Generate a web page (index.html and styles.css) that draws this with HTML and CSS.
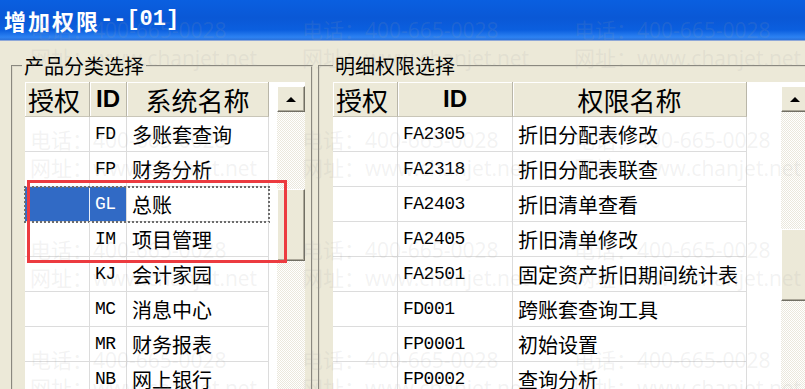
FILE: index.html
```html
<!DOCTYPE html>
<html lang="zh-CN">
<head>
<meta charset="utf-8">
<title>增加权限--[01]</title>
<link rel="stylesheet" href="styles.css">
</head>
<body>
<div class="window">
  <div class="titlebar"><span class="title-cn">增加权限</span><span class="title-code">--[01]</span></div>
  <div class="panes">
    <fieldset class="group group-left">
      <legend>产品分类选择</legend>
      <div class="list">
        <div class="grid grid-left">
          <div class="row head"><div class="c c-auth">授权</div><div class="c c-id">ID</div><div class="c c-name">系统名称</div></div>
          <div class="row"><div class="c c-auth"></div><div class="c c-id">FD</div><div class="c c-name">多账套查询</div></div>
          <div class="row"><div class="c c-auth"></div><div class="c c-id">FP</div><div class="c c-name">财务分析</div></div>
          <div class="row sel"><div class="c c-auth"></div><div class="c c-id">GL</div><div class="c c-name">总账</div></div>
          <div class="row"><div class="c c-auth"></div><div class="c c-id">IM</div><div class="c c-name">项目管理</div></div>
          <div class="row"><div class="c c-auth"></div><div class="c c-id">KJ</div><div class="c c-name">会计家园</div></div>
          <div class="row"><div class="c c-auth"></div><div class="c c-id">MC</div><div class="c c-name">消息中心</div></div>
          <div class="row"><div class="c c-auth"></div><div class="c c-id">MR</div><div class="c c-name">财务报表</div></div>
          <div class="row"><div class="c c-auth"></div><div class="c c-id">NB</div><div class="c c-name">网上银行</div></div>
        </div>
        <div class="gap"></div>
        <div class="vscroll">
          <div class="btn-up"></div>
          <div class="track"><div class="thumb thumb-left"></div></div>
        </div>
      </div>
    </fieldset>
    <fieldset class="group group-right">
      <legend>明细权限选择</legend>
      <div class="list">
        <div class="grid grid-right">
          <div class="row head"><div class="c c-auth">授权</div><div class="c c-id">ID</div><div class="c c-name">权限名称</div></div>
          <div class="row"><div class="c c-auth"></div><div class="c c-id">FA2305</div><div class="c c-name">折旧分配表修改</div></div>
          <div class="row"><div class="c c-auth"></div><div class="c c-id">FA2318</div><div class="c c-name">折旧分配表联查</div></div>
          <div class="row"><div class="c c-auth"></div><div class="c c-id">FA2403</div><div class="c c-name">折旧清单查看</div></div>
          <div class="row"><div class="c c-auth"></div><div class="c c-id">FA2405</div><div class="c c-name">折旧清单修改</div></div>
          <div class="row"><div class="c c-auth"></div><div class="c c-id">FA2501</div><div class="c c-name">固定资产折旧期间统计表</div></div>
          <div class="row"><div class="c c-auth"></div><div class="c c-id">FD001</div><div class="c c-name">跨账套查询工具</div></div>
          <div class="row"><div class="c c-auth"></div><div class="c c-id">FP0001</div><div class="c c-name">初始设置</div></div>
          <div class="row"><div class="c c-auth"></div><div class="c c-id">FP0002</div><div class="c c-name">查询分析</div></div>
        </div>
        <div class="gap gap-right"></div>
        <div class="vscroll">
          <div class="btn-up"></div>
          <div class="track"><div class="thumb thumb-right"></div></div>
        </div>
      </div>
    </fieldset>
  </div>
  <div class="redbox"></div>
  <div class="watermark">
    <div class="wm"><span>电话：400-665-0028</span><span>网址：www.chanjet.net</span></div>
    <div class="wm"><span>电话：400-665-0028</span><span>网址：www.chanjet.net</span></div>
    <div class="wm"><span>电话：400-665-0028</span><span>网址：www.chanjet.net</span></div>
    <div class="wm"><span>电话：400-665-0028</span><span>网址：www.chanjet.net</span></div>
    <div class="wm"><span>电话：400-665-0028</span><span>网址：www.chanjet.net</span></div>
    <div class="wm"><span>电话：400-665-0028</span><span>网址：www.chanjet.net</span></div>
    <div class="wm"><span>电话：400-665-0028</span><span>网址：www.chanjet.net</span></div>
    <div class="wm"><span>电话：400-665-0028</span><span>网址：www.chanjet.net</span></div>
    <div class="wm"><span>电话：400-665-0028</span><span>网址：www.chanjet.net</span></div>
    <div class="wm"><span>电话：400-665-0028</span><span>网址：www.chanjet.net</span></div>
    <div class="wm"><span>电话：400-665-0028</span><span>网址：www.chanjet.net</span></div>
    <div class="wm"><span>电话：400-665-0028</span><span>网址：www.chanjet.net</span></div>
  </div>
</div>
</body>
</html>
```
FILE: styles.css
```css
* { box-sizing: border-box; }
html, body { margin: 0; padding: 0; }
body {
  width: 805px;
  height: 389px;
  overflow: hidden;
  background: #ece9d8;
  font-family: "Noto Sans CJK SC", sans-serif;
  color: #000;
}
.window {
  position: relative;
  width: 805px;
  height: 389px;
  overflow: hidden;
}
.titlebar {
  height: 41px;
  display: flex;
  align-items: center;
  padding-left: 4px;
  color: #fff;
  background: linear-gradient(to bottom, #0a5fe0 0%, #0a58d6 45%, #0b5fdf 75%, #2d82f2 93%, #2a72dc 100%);
  border-bottom: 1px solid #8fa8d8;
}
.title-cn {
  font: bold 22px/1 "Noto Sans CJK SC", sans-serif;
  letter-spacing: 2px;
}
.title-code {
  font: bold 22px/1 "Liberation Mono", monospace;
}
.panes {
  display: flex;
  align-items: flex-start;
  margin-top: 13px;
}
.group {
  flex-shrink: 0;
  margin: 0;
  min-width: 0;
  height: 360px;
  border: 2px groove #dedbcc;
  padding-top: 4px;
}
.group legend {
  font-size: 20px;
  line-height: 24px;
  padding: 0 2px;
}
.group-left {
  margin-left: 11px;
  width: 302px;
  padding-left: 12px;
  padding-right: 6px;
}
.group-left legend { margin-left: -3px; }
.group-right {
  margin-left: 5px;
  width: 520px;
  padding-left: 13px;
  padding-right: 0;
}
.list {
  display: flex;
  background: #fff;
  height: 330px;
}
.grid { display: flex; flex-direction: column; flex-shrink: 0; }
.row { display: grid; height: 35px; }
.grid-left .row { grid-template-columns: 65px 37px 142px; }
.grid-right .row { grid-template-columns: 65px 115px 234px; }
.c {
  display: flex;
  align-items: center;
  border-right: 1px solid #dcdcdc;
  border-bottom: 1px solid #dcdcdc;
  white-space: nowrap;
  overflow: hidden;
}
.c-id {
  padding-left: 5px;
  font: 18px "Liberation Mono", monospace;
  letter-spacing: -0.5px;
  color: #000;
}
.c-name {
  padding-left: 5px;
  font-size: 20px;
}
.head .c {
  background: #ece9d8;
  border-right: 1px solid #b9b6a8;
  border-bottom: 1px solid #c9c6b8;
  box-shadow: inset 1px 1px 0 #fff;
  font-size: 26px;
  font-family: "Noto Sans CJK SC", sans-serif;
  font-weight: normal;
}
.head .c-auth { padding-left: 3px; }
.head .c-id {
  justify-content: center;
  padding-left: 0;
  letter-spacing: 0;
  font: bold 24px "Liberation Sans", sans-serif;
}
.head .c-name { justify-content: center; padding-left: 0; }
.sel { outline: 2px dotted #6d6d6d; outline-offset: -1px; }
.sel .c-auth, .sel .c-id {
  background: #316ac5;
  color: #fff;
}
.sel .c-auth { border-right-color: #e8eef8; }
.gap { width: 8px; flex-shrink: 0; }
.gap-right { width: 34px; }
.vscroll {
  width: 28px;
  flex-shrink: 0;
  margin-top: 4px;
  display: flex;
  flex-direction: column;
}
.btn-up, .thumb {
  background: #ece9d8;
  border: 1px solid;
  border-color: #fff #716f64 #716f64 #fff;
  box-shadow: inset -1px -1px 0 #aca899;
}
.btn-up {
  height: 26px;
  display: flex;
  align-items: center;
  justify-content: center;
}
.btn-up::before {
  content: "";
  border-left: 5px solid transparent;
  border-right: 5px solid transparent;
  border-bottom: 5px solid #000;
}
.track {
  flex: 1;
  background-color: #fff;
  background-image: repeating-conic-gradient(#ebe8dc 0 25%, #fff 0 50%);
  background-size: 2px 2px;
}
.thumb-left { margin-top: 77px; height: 72px; }
.thumb-right { margin-top: 117px; height: 72px; }
.redbox {
  position: absolute;
  left: 27px;
  top: 180px;
  width: 260px;
  height: 83px;
  border: 3px solid #ec3b40;
}
.watermark {
  position: absolute;
  left: 30px;
  top: 16px;
  display: grid;
  grid-template-columns: repeat(3, 272px);
  grid-auto-rows: 56px;
  row-gap: 54px;
  pointer-events: none;
  color: rgba(160, 160, 160, 0.14);
  font: 21px/28px "Open Sans", "Noto Sans CJK SC", sans-serif;
  white-space: nowrap;
}
.wm { display: flex; flex-direction: column; }
```
